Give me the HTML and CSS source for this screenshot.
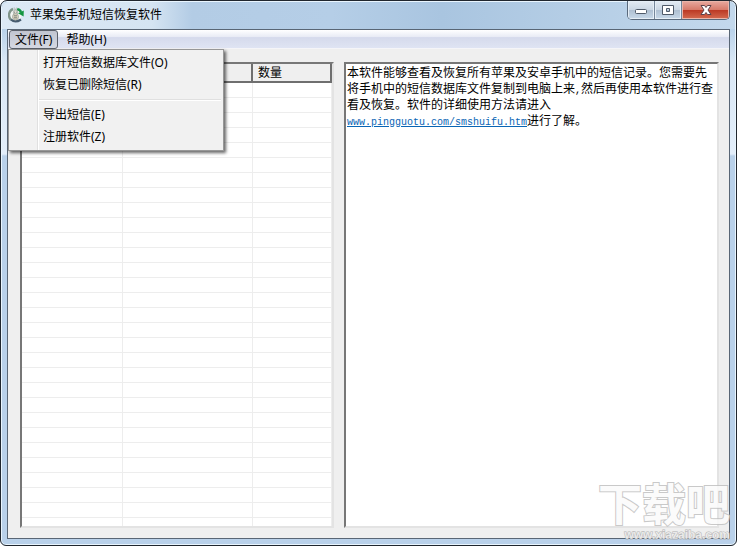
FILE: index.html
```html
<!DOCTYPE html>
<html lang="zh-CN">
<head>
<meta charset="utf-8">
<title>苹果兔手机短信恢复软件</title>
<link rel="stylesheet" href="styles.css">
</head>
<body>
<div class="window">
  <header class="titlebar">
    <svg class="app-icon" viewBox="0 0 16 16" aria-hidden="true">
      <circle cx="7.5" cy="8.5" r="6" fill="#f4f6f3"/>
      <path d="M5 1.8A6.8 6.8 0 0 0 3 12.8" fill="none" stroke="#80958a" stroke-width="2.4"/>
      <path d="M3 12.4Q7 16.5 13 12.5" fill="none" stroke="#465c70" stroke-width="2.2"/>
      <path d="M9 2.2Q12 2.4 13 5" fill="none" stroke="#189447" stroke-width="2.6"/>
      <path d="M10 6.3 15.8 3.5 15.6 9.5Z" fill="#149640"/>
      <path d="M6 .5 7.5 4 9 .5" fill="none" stroke="#c5cccb" stroke-width="1.6"/>
      <circle cx="7.5" cy="5.2" r="2.3" fill="#dedbd0" stroke="#949e9a" stroke-width=".6"/>
      <ellipse cx="7.5" cy="9.8" rx="3" ry="3.3" fill="#d6cfba" stroke="#929b94" stroke-width=".7"/>
      <path d="M6 5.2h1M8.2 5.2h1M6 8.8h3M6 10.8h3" stroke="#66726d" stroke-width=".8"/>
    </svg>
    <h1 class="title">苹果兔手机短信恢复软件</h1>
    <div class="controls">
      <button class="control" type="button" aria-label="最小化">
        <svg class="glyph" viewBox="0 0 14 12"><rect x="1.5" y="5.5" width="11" height="4" rx="1" fill="#fff" stroke="#4f5a69"/></svg>
      </button>
      <button class="control" type="button" aria-label="最大化">
        <svg class="glyph" viewBox="0 0 14 12"><path d="M1.5 1.5h11v9h-11zM5.5 4.500v3h3v-3z" fill="#fff" fill-rule="evenodd" stroke="#4f5a69"/></svg>
      </button>
      <button class="control close" type="button" aria-label="关闭">
        <svg class="glyph" viewBox="0 0 14 12"><path d="M2 1.500h3.500L7 3.500 8.500 1.500H12L9 6l3 4.500H8.500L7 8.500 5.500 10.500H2L5 6z" fill="#fff" stroke="#5b4149"/></svg>
      </button>
    </div>
  </header>
  <div class="client">
    <nav class="menubar">
      <div class="menu">
        <button class="menu-button open" type="button" aria-expanded="true">文件(F)</button>
        <div class="dropdown">
          <button class="item" type="button">打开短信数据库文件(O)</button>
          <button class="item" type="button">恢复已删除短信(R)</button>
          <hr class="separator">
          <button class="item" type="button">导出短信(E)</button>
          <button class="item" type="button">注册软件(Z)</button>
        </div>
      </div>
      <button class="menu-button" type="button">帮助(H)</button>
    </nav>
    <main class="content">
      <section class="panel list">
        <table class="grid">
          <colgroup><col class="col-name"><col class="col-number"><col></colgroup>
          <thead><tr><th></th><th></th><th>数量</th></tr></thead>
          <tbody>
            <tr><td></td><td></td><td></td></tr><tr><td></td><td></td><td></td></tr>
            <tr><td></td><td></td><td></td></tr><tr><td></td><td></td><td></td></tr>
            <tr><td></td><td></td><td></td></tr><tr><td></td><td></td><td></td></tr>
            <tr><td></td><td></td><td></td></tr><tr><td></td><td></td><td></td></tr>
            <tr><td></td><td></td><td></td></tr><tr><td></td><td></td><td></td></tr>
            <tr><td></td><td></td><td></td></tr><tr><td></td><td></td><td></td></tr>
            <tr><td></td><td></td><td></td></tr><tr><td></td><td></td><td></td></tr>
            <tr><td></td><td></td><td></td></tr><tr><td></td><td></td><td></td></tr>
            <tr><td></td><td></td><td></td></tr><tr><td></td><td></td><td></td></tr>
            <tr><td></td><td></td><td></td></tr><tr><td></td><td></td><td></td></tr>
            <tr><td></td><td></td><td></td></tr><tr><td></td><td></td><td></td></tr>
            <tr><td></td><td></td><td></td></tr><tr><td></td><td></td><td></td></tr>
            <tr><td></td><td></td><td></td></tr><tr><td></td><td></td><td></td></tr>
            <tr><td></td><td></td><td></td></tr><tr><td></td><td></td><td></td></tr>
            <tr><td></td><td></td><td></td></tr><tr><td></td><td></td><td></td></tr>
          </tbody>
        </table>
      </section>
      <section class="panel message">
        <p>本软件能够查看及恢复所有苹果及安卓手机中的短信记录。您需要先将手机中的短信数据库文件复制到电脑上来<span class="latin">,</span>然后再使用本软件进行查看及恢复。软件的详细使用方法请进入<a class="latin" href="#">www.pingguotu.com/smshuifu.htm</a>进行了解。</p>
      </section>
    </main>
  </div>
  <div class="watermark">
    <span class="brand">下载吧</span>
    <span class="site">www.xiazaiba.com</span>
  </div>
</div>
</body>
</html>
```
FILE: styles.css
```css
* {
  box-sizing: border-box;
}

body {
  margin: 0;
  background: #fff;
  color: #000;
  font: 12px/16px "Noto Sans", "Noto Sans CJK SC", sans-serif;
}

button {
  margin: 0;
  padding: 0;
  border: 0;
  background: none;
  color: inherit;
  font: inherit;
}

.window {
  position: relative;
  display: flex;
  flex-direction: column;
  height: 100vh;
  padding: 0 6px 6px;
  overflow: hidden;
  border: 1px solid #20262e;
  border-radius: 7px 7px 6px 6px;
  background: linear-gradient(#b4cde6 0, #b9d2ea 28px, #d9e7f5 60px, #e3eefa 153px, #b9d1ea 155px);
  box-shadow: inset 0 0 0 1px #e9f5fe;
}

.titlebar {
  display: flex;
  flex: none;
  align-items: flex-start;
  height: 27px;
  background: linear-gradient(90deg, #dce9f5 0, #d5e4f2 150px, #b3cce5 190px, #b5cee7 45%, #a9c5e0 60%, #c3d8ec);
  margin: 1px -5px 0;
  padding: 0 5px;
  border-radius: 6px 6px 0 0;
}

.app-icon {
  width: 16px;
  height: 16px;
  margin: 5px 6px 0 1px;
}

.title {
  margin: 4px 0 0;
  font-size: 12px;
  font-weight: 400;
  line-height: 18px;
}

.controls {
  display: flex;
  margin: -1px 0 0 auto;
  overflow: hidden;
  border: 1px solid #59697b;
  border-top: 0;
  border-radius: 0 0 5px 5px;
}

.control {
  display: flex;
  align-items: center;
  justify-content: center;
  width: 27px;
  height: 18px;
  border-right: 1px solid #75869a;
  background: linear-gradient(#e3ebf3 0, #cbd7e4 48%, #aebfd1 50%, #c8d9e9);
  box-shadow: inset 0 0 0 1px #e5eef6;
}

.close {
  width: 47px;
  border-right: 0;
  background: linear-gradient(#e8aaa0 0, #d77b6b 48%, #bb3823 50%, #d46b50);
  box-shadow: inset 0 0 0 1px #eab5a9;
}

.glyph {
  width: 14px;
  height: 12px;
}

.client {
  display: flex;
  flex: 1;
  flex-direction: column;
  min-height: 0;
  border: 1px solid #596675;
  background: #efefef;
}

.menubar {
  display: flex;
  flex: none;
  height: 19px;
  border-bottom: 1px solid #f5f5f8;
  background: linear-gradient(#fff 0, #e8ebf5 38%, #d5daec 42%, #dfe4f3);
}

.menu {
  position: relative;
}

.menu-button {
  height: 19px;
  margin-left: 1px;
  padding: 0 7px;
  line-height: 19px;
}

.menu-button.open {
  padding: 0 5px;
  border: 1px solid #5b606a;
  border-radius: 3px;
  background: linear-gradient(#c1c5d0, #d5d8e2);
  line-height: 17px;
}

.dropdown {
  position: absolute;
  z-index: 2;
  top: 19px;
  left: 0;
  width: 216px;
  padding: 2px;
  border: 1px solid #979797;
  background: linear-gradient(90deg, #f1f1f1 28px, #e0e0e0 28px, #e0e0e0 29px, #fff 29px, #fff 30px, #f1f1f1 30px);
  box-shadow: 2px 2px 3px #0009;
}

.item {
  display: block;
  width: 100%;
  height: 22px;
  padding-left: 32px;
  line-height: 20px;
  text-align: left;
}

.separator {
  height: 2px;
  margin: 3px 0 3px 28px;
  border: 0;
  border-top: 1px solid #e0e0e0;
  background: #fff;
}

.content {
  display: grid;
  flex: 1;
  grid-template-columns: 314fr 375fr;
  gap: 10px;
  min-height: 0;
  padding: 13px 10px 10px 12px;
}

.panel {
  min-width: 0;
  min-height: 0;
  overflow: hidden;
  border: 2px solid;
  border-color: #777 #e3e3e3 #e3e3e3 #777;
  background: #fff;
}

.grid {
  width: 100%;
  border-collapse: separate;
  border-spacing: 0;
  table-layout: fixed;
}

.col-name {
  width: 101px;
}

.col-number {
  width: 130px;
}

th {
  height: 19px;
  padding: 1px 5px 0;
  border: 1px solid #6f6f6f;
  border-width: 0 2px 2px 0;
  background: #efefef;
  font-weight: 400;
  line-height: 16px;
  text-align: left;
}

td {
  height: 15px;
  padding: 0;
  border: 1px solid #ededed;
  border-width: 0 1px 1px 0;
}

.message {
  padding: 0 1px;
}

.message p {
  margin: 0;
  font-family: "Noto Sans CJK SC", sans-serif;
  line-height: 16px;
}

.latin {
  font-family: "Liberation Mono", monospace;
  font-size: 10px;
  line-height: 10px;
}

.message a {
  color: #0965b5;
}

.watermark {
  position: absolute;
  right: 6px;
  bottom: 3px;
  display: flex;
  flex-direction: column;
  align-items: flex-end;
  color: #fbfbfb;
  opacity: .85;
  pointer-events: none;
}

.brand {
  height: 52px;
  font: 700 44px/50px "Noto Sans CJK SC", sans-serif;
  -webkit-text-stroke: 2px #c0c0c0;
  paint-order: stroke fill;
}

.site {
  height: 13px;
  color: #e9e9e9;
  font: 700 12px/13px "Liberation Sans", sans-serif;
  -webkit-text-stroke: 1px #a8a8a8;
  paint-order: stroke fill;
}
```
